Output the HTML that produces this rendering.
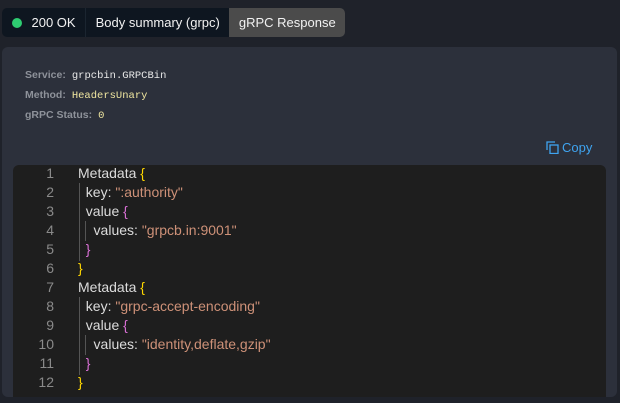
<!DOCTYPE html>
<html><head><style>
body{margin:0;width:620px;height:403px;background:#1f222a;font-family:"Liberation Sans",sans-serif;overflow:hidden;position:relative}
.tabs{position:absolute;left:2px;top:8px;height:29px;display:flex;border-radius:5px;overflow:hidden;background:#0e1620;font-size:13px;color:#f2f2f2}
.tabs div{line-height:29px;padding:0 9.5px}
.dot{display:inline-block;width:10px;height:10px;border-radius:50%;background:#2ecc71;margin-right:10px;vertical-align:-1px}
.panel{position:absolute;left:2px;top:47px;width:615px;height:350px;background:#2c303b;border-radius:6px;overflow:hidden}
.meta{position:absolute;left:23px;font-size:10.5px;font-weight:bold;color:#8e929a}
.meta span{font-family:"Liberation Mono",monospace;font-weight:normal;color:#e8e8e8;margin-left:6px}
.copy{position:absolute;left:544px;top:93px;color:#3fa4f0;font-size:13px}
.code{position:absolute;left:11px;top:118px;width:593px;height:240px;background:#1e1e1e;border-radius:6px;font-size:14px;color:#dcdcdc}
.ln{position:absolute;left:0;width:41px;text-align:right;color:#8a8a8a}
.l{position:absolute;left:65px;white-space:pre}
.s{color:#ce9178}.y{color:#ffd700}.p{color:#da70d6}
.g{position:absolute;width:1px;background:#555}
</style></head><body>
<div class="tabs"><div><span class="dot"></span>200 OK</div><div style="border-left:1px solid #1b2530">Body summary (grpc)</div><div style="background:#4b4b4b">gRPC Response</div></div>
<div class="panel">
<div class="meta" style="top:22px">Service:<span>grpcbin.GRPCBin</span></div>
<div class="meta" style="top:42px">Method:<span style="color:#f0e6a0">HeadersUnary</span></div>
<div class="meta" style="top:62px">gRPC Status:<span style="color:#f0e6a0">0</span></div>
<div class="copy"><svg width="13" height="13" viewBox="0 0 13 13" style="vertical-align:-2px;margin-right:3px" fill="none" stroke="#3fa4f0" stroke-width="1.3"><rect x="4" y="4" width="8" height="8.5"/><path d="M1 9V1h8"/></svg>Copy</div>
<div class="code">
<div class="g" style="left:66px;top:18px;height:78px"></div>
<div class="g" style="left:72px;top:56px;height:20px"></div>
<div class="g" style="left:66px;top:132px;height:78px"></div>
<div class="g" style="left:72px;top:170px;height:20px"></div>
<div class="ln" style="top:0">1</div><div class="l" style="top:0">Metadata <span class="y">{</span></div>
<div class="ln" style="top:19px">2</div><div class="l" style="top:19px">  key: <span class="s">":authority"</span></div>
<div class="ln" style="top:38px">3</div><div class="l" style="top:38px">  value <span class="p">{</span></div>
<div class="ln" style="top:57px">4</div><div class="l" style="top:57px">    values: <span class="s">"grpcb.in:9001"</span></div>
<div class="ln" style="top:76px">5</div><div class="l" style="top:76px">  <span class="p">}</span></div>
<div class="ln" style="top:95px">6</div><div class="l" style="top:95px"><span class="y">}</span></div>
<div class="ln" style="top:114px">7</div><div class="l" style="top:114px">Metadata <span class="y">{</span></div>
<div class="ln" style="top:133px">8</div><div class="l" style="top:133px">  key: <span class="s">"grpc-accept-encoding"</span></div>
<div class="ln" style="top:152px">9</div><div class="l" style="top:152px">  value <span class="p">{</span></div>
<div class="ln" style="top:171px">10</div><div class="l" style="top:171px">    values: <span class="s">"identity,deflate,gzip"</span></div>
<div class="ln" style="top:190px">11</div><div class="l" style="top:190px">  <span class="p">}</span></div>
<div class="ln" style="top:209px">12</div><div class="l" style="top:209px"><span class="y">}</span></div>
</div>
</div>
</body></html>
